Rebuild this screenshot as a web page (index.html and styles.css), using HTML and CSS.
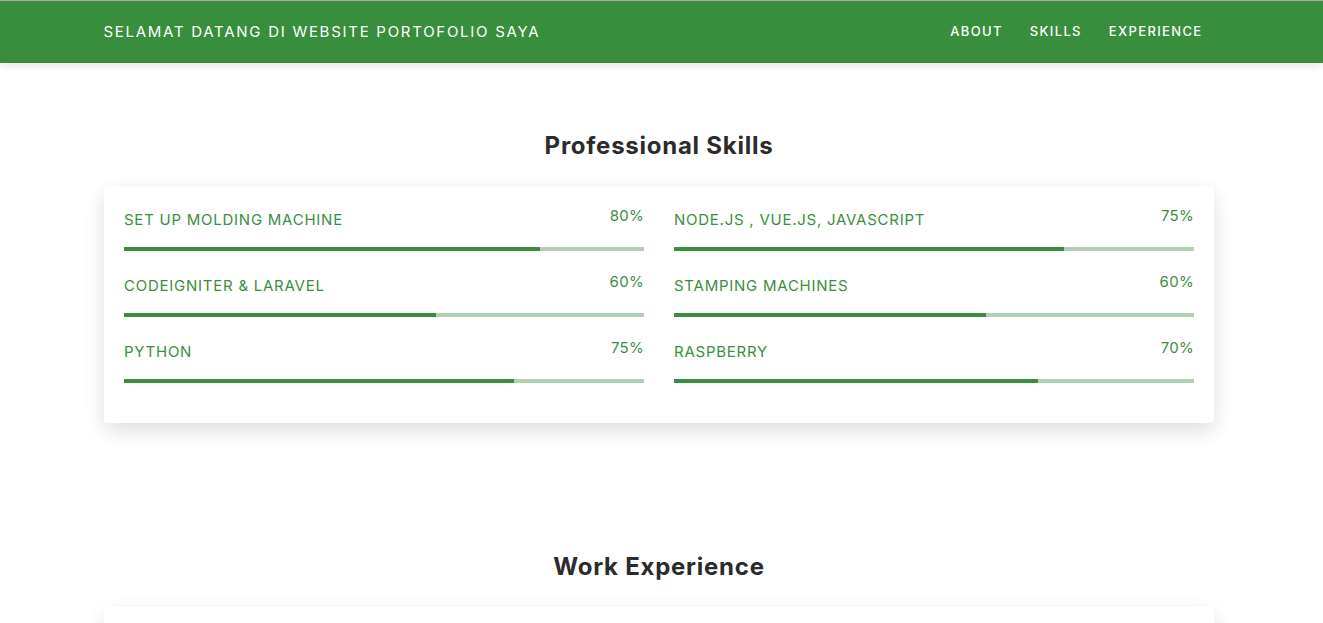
FILE: index.html
```html
<!DOCTYPE html>
<html lang="id">
<head>
<meta charset="utf-8">
<title>Portofolio</title>
<link rel="stylesheet" href="styles.css">
</head>
<body>
<header class="navbar">
  <div class="container nav-inner">
    <a class="brand" href="#">SELAMAT DATANG DI WEBSITE PORTOFOLIO SAYA</a>
    <nav class="nav-links">
      <a href="#about">ABOUT</a>
      <a href="#skills">SKILLS</a>
      <a href="#experience">EXPERIENCE</a>
    </nav>
  </div>
</header>

<main class="page">
  <section class="section" id="skills">
    <div class="container">
      <h2 class="section-title">Professional Skills</h2>
      <div class="card skills-card">
        <div class="skills-grid">
          <div class="skill">
            <div class="skill-head"><span class="skill-name">SET UP MOLDING MACHINE</span><span class="skill-pct">80%</span></div>
            <div class="bar"><div class="fill" style="width:80%"></div></div>
          </div>
          <div class="skill">
            <div class="skill-head"><span class="skill-name">NODE.JS , VUE.JS, JAVASCRIPT</span><span class="skill-pct">75%</span></div>
            <div class="bar"><div class="fill" style="width:75%"></div></div>
          </div>
          <div class="skill">
            <div class="skill-head"><span class="skill-name">CODEIGNITER &amp; LARAVEL</span><span class="skill-pct">60%</span></div>
            <div class="bar"><div class="fill" style="width:60%"></div></div>
          </div>
          <div class="skill">
            <div class="skill-head"><span class="skill-name">STAMPING MACHINES</span><span class="skill-pct">60%</span></div>
            <div class="bar"><div class="fill" style="width:60%"></div></div>
          </div>
          <div class="skill">
            <div class="skill-head"><span class="skill-name">PYTHON</span><span class="skill-pct">75%</span></div>
            <div class="bar"><div class="fill" style="width:75%"></div></div>
          </div>
          <div class="skill">
            <div class="skill-head"><span class="skill-name">RASPBERRY</span><span class="skill-pct">70%</span></div>
            <div class="bar"><div class="fill" style="width:70%"></div></div>
          </div>
        </div>
      </div>
    </div>
  </section>

  <section class="section" id="experience">
    <div class="container">
      <h2 class="section-title">Work Experience</h2>
      <div class="card exp-card"></div>
    </div>
  </section>
</main>
</body>
</html>
```

FILE: styles.css
```css
* { box-sizing: border-box; }

html, body {
  margin: 0;
  padding: 0;
  background: #fff;
  font-family: "Inter", "Open Sans", sans-serif;
  color: #333;
}

body {
  border-top: 1px solid #a9a9a9;
  overflow: hidden;
}

.container {
  width: 1110px;
  margin: 0 auto;
}

.navbar {
  background: #388e3c;
  height: 62px;
  box-shadow: 0 2px 10px rgba(0, 0, 0, 0.12);
  position: relative;
  z-index: 2;
}

.page {
  padding-right: 5px;
}

.navbar .container {
  position: relative;
  left: -2px;
}

.nav-inner {
  height: 60px;
  display: flex;
  align-items: center;
  justify-content: space-between;
}

.brand {
  color: #fff;
  text-decoration: none;
  font-size: 15px;
  letter-spacing: 1.72px;
  margin-left: -1px;
}

.nav-links {
  display: flex;
  gap: 27px;
  padding-right: 12px;
}

.nav-links a {
  color: #fff;
  text-decoration: none;
  font-size: 13px;
  font-weight: 500;
  letter-spacing: 1.35px;
}

.section {
  padding: 68px 0 61px;
}

.section-title {
  margin: 0 0 26px;
  text-align: center;
  font-size: 24px;
  line-height: 29px;
  font-weight: 700;
  letter-spacing: 0.75px;
  color: #2b2b2b;
}

.card {
  background: #fff;
  border-radius: 4px;
  box-shadow: 0 8px 22px rgba(0, 0, 0, 0.13);
}

.skills-card {
  padding: 19px 20px 20px;
}

.skills-grid {
  display: grid;
  grid-template-columns: 1fr 1fr;
  column-gap: 30px;
}

.skill {
  padding-bottom: 20px;
}

.skill-head {
  display: flex;
  justify-content: space-between;
  align-items: flex-start;
  height: 26px;
  font-size: 15px;
  line-height: 22px;
  color: #3a8f3e;
}

.skill-name {
  margin-top: 4px;
  letter-spacing: 0.75px;
}

.skill-pct {
  letter-spacing: 0.3px;
}

.bar {
  margin-top: 16px;
  height: 4px;
  background: #b1cfb2;
}

.fill {
  height: 100%;
  background: #388e3c;
}

.exp-card {
  height: 200px;
}
```
